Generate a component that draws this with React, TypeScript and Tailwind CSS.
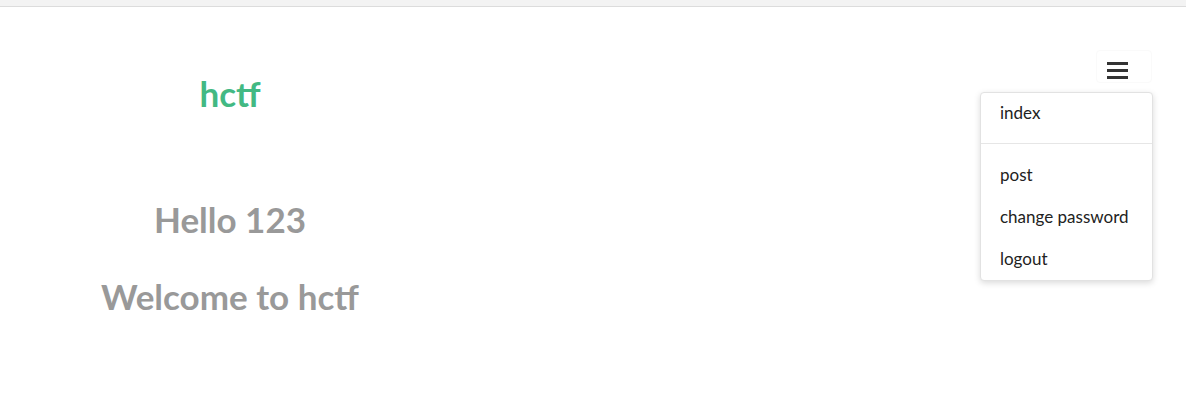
import React from 'react';

const items = ['post', 'change password', 'logout'];

const App = () => {
  return (
    <div className="relative w-full h-[401px] bg-white font-['Lato','Noto_Sans',sans-serif] overflow-hidden">
      <div className="h-[7px] bg-[#f3f3f3] border-b border-[#dcdcdc]" />
      <div className="flex">
        <div className="w-[460px] flex flex-col items-center">
          <h1 className="mt-[64px] text-[35px] leading-[44px] font-bold text-[#42b983]">hctf</h1>
          <h2 className="mt-[82px] text-[35px] leading-[44px] font-bold text-[#999999]">Hello 123</h2>
          <h2 className="mt-[33px] text-[35px] leading-[44px] font-bold text-[#999999]">Welcome to hctf</h2>
        </div>
      </div>
      <div className="absolute left-[1096px] top-[50px] w-[56px] h-[33px] rounded border border-[#fafafa] pl-[10px] pt-[11px]">
        <div className="flex flex-col gap-[4px] w-[21px]">
          <span className="block h-[3px] bg-[#333]" />
          <span className="block h-[3px] bg-[#333]" />
          <span className="block h-[3px] bg-[#333]" />
        </div>
      </div>
      <div className="absolute left-[980px] top-[92px] w-[173px] rounded bg-white border border-[#e2e2e2] shadow-[0_2px_6px_rgba(0,0,0,0.15)] text-[17px] text-[#222]">
        <div className="px-[19px] pt-[7px] pb-[7px] leading-[26px]">index</div>
        <div className="my-[10px] border-t border-[#e6e6e6]" />
        {items.map((t) => (
          <div key={t} className="px-[19px] py-[8px] leading-[26px]">{t}</div>
        ))}
      </div>
    </div>
  );
};

export default App;
